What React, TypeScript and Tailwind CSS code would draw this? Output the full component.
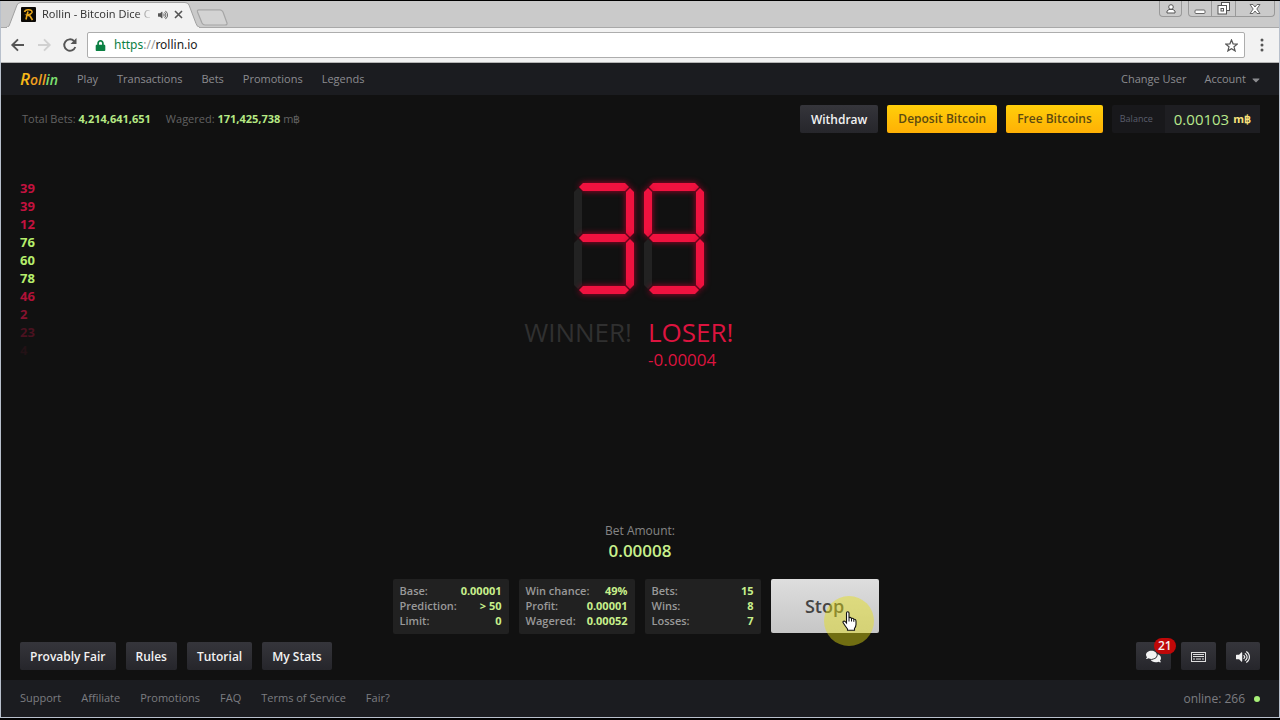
// App.tsx
import { FaVolumeUp, FaComments, FaLock, FaCaretDown } from 'react-icons/fa';

const navLinks = ['Play', 'Transactions', 'Bets', 'Promotions', 'Legends'];
const footerLinks = ['Support', 'Affiliate', 'Promotions', 'FAQ', 'Terms of Service', 'Fair?'];
const infoButtons = ['Provably Fair', 'Rules', 'Tutorial', 'My Stats'];

const rolls = [
  { value: 39, color: 'text-[#c4123f]' },
  { value: 39, color: 'text-[#c4123f]' },
  { value: 12, color: 'text-[#c4123f]' },
  { value: 76, color: 'text-[#b6ee6c]' },
  { value: 60, color: 'text-[#b6ee6c]' },
  { value: 78, color: 'text-[#b6ee6c]' },
  { value: 46, color: 'text-[#b01238]' },
  { value: 2, color: 'text-[#86122f]' },
  { value: 23, color: 'text-[#4b1220]' },
  { value: 4, color: 'text-[#231216]' },
];

const stats = [
  [['Base:', '0.00001'], ['Prediction:', '> 50'], ['Limit:', '0']],
  [['Win chance:', '49%'], ['Profit:', '0.00001'], ['Wagered:', '0.00052']],
  [['Bets:', '15'], ['Wins:', '8'], ['Losses:', '7']],
];

// segment order: top, top-left, top-right, middle, bottom-left, bottom-right, bottom
const segments = [
  '5,5 9,1 51,1 55,5 51,9 9,9',
  '4,6 8,10 8,51 4,55 0,51 0,10',
  '56,6 60,10 60,51 56,55 52,51 52,10',
  '5,56 9,52 51,52 55,56 51,60 9,60',
  '4,57 8,61 8,103 4,107 0,103 0,61',
  '56,57 60,61 60,103 56,107 52,103 52,61',
  '5,108 9,104 51,104 55,108 51,112 9,112',
];

const darkButton =
  'h-7 rounded-xs bg-linear-to-b from-[#35353b] to-[#26262b] pt-px text-[12px] font-semibold text-[#f2f2f2]';
const yellowButton =
  'h-7 rounded-xs bg-linear-to-b from-[#ffcf0a] to-[#ffb005] px-[11px] text-[12px] font-semibold text-[#5c4a10]';

const Digit = ({ on }: { on: number[] }) => (
  <svg width="60" height="113" viewBox="0 0 60 113" className="overflow-visible">
    {segments.map((points, i) => (
      <polygon
        key={i}
        points={points}
        className={on[i] ? 'fill-[#f0123f] drop-shadow-[0_0_3px_#b0002a]' : 'fill-[#222]'}
      />
    ))}
  </svg>
);

const BrowserBar = () => (
  <div className="font-['Noto_Sans','Open_Sans',sans-serif]">
    {/* Tabs */}
    <div className="flex h-[27px] items-start justify-between border-b border-[#a8a8a8] bg-[#cacaca]">
      <div className="flex">
        <div className="relative ml-[5px] h-[27px] w-[194px]">
          <svg width="194" height="27" viewBox="0 0 194 27" className="absolute inset-0">
            <path d="M0 26.5 C3 26 3 25 4 22.500 L11 4 Q12 1.500 15 1.500 H179 Q182 1.500 183 4 L190 22.500 Q191 26 194 26.500 V27 H0Z" fill="#f2f2f2" stroke="#a0a0a0" />
            <path d="M1 27H193" stroke="#f2f2f2" strokeWidth="2" />
          </svg>
          <div className="relative flex h-full items-center pl-[15px]">
            <svg width="15" height="15" viewBox="0 0 15 15" className="shrink-0">
              <rect width="15" height="15" rx="1" fill="#0b0906" />
              <path d="M3.500 5Q4 3 7 2.800Q11.500 2.500 11 5.500Q10 7.500 6.500 8L9 9L11.500 13M7 4.500L6 8L5 12.500" fill="none" stroke="#e8a81c" strokeWidth="1.600" />
            </svg>
            <span className="ml-[6px] w-[116px] bg-linear-to-r from-[#333] from-80% to-transparent to-95% bg-clip-text text-[11px] whitespace-nowrap text-transparent">
              Rollin - Bitcoin Dice C
            </span>
            <FaVolumeUp className="size-[10px] shrink-0 text-[#555]" />
            <button aria-label="Close tab" className="ml-[6px] shrink-0">
              <svg width="9" height="9" viewBox="0 0 9 9">
                <path d="M1 1L8 8M8 1L1 8" stroke="#555" strokeWidth="1.6" />
              </svg>
            </button>
          </div>
        </div>
        <button aria-label="New tab" className="mt-[6px]">
          <svg width="32" height="17" viewBox="0 0 32 17" className="-ml-1">
            <path d="M3 .8H24Q26 .8 27 3L31 14Q31.500 16 29 16H9Q7 16 6 14L1.500 3Q1 .8 3 .8Z" fill="#d3d3d3" stroke="#a6a6a6" strokeWidth="1.200" />
          </svg>
        </button>
      </div>
      <div className="mr-1 flex h-4 text-[#777]">
        <button aria-label="Profile" className="mr-[6px] flex w-[23px] items-center justify-center rounded-b border border-t-0 border-[#999]">
          <svg width="10" height="10" viewBox="0 0 10 10" fill="#fff" stroke="#555">
            <path d="M1 9V7L3 5.500H7L9 7V9Z" />
            <circle cx="5" cy="3" r="2.300" />
          </svg>
        </button>
        <button aria-label="Minimize" className="flex w-6 items-center justify-center rounded-bl border border-t-0 border-[#999]">
          <svg width="12" height="12" viewBox="0 0 12 12">
            <rect x="1" y="7" width="10" height="3.500" rx="1" fill="#fff" stroke="#666" />
          </svg>
        </button>
        <button aria-label="Restore" className="flex w-[23px] items-center justify-center border-b border-[#999]">
          <svg width="13" height="13" viewBox="0 0 13 13" fill="#fff" stroke="#555">
            <rect x="4.500" y=".5" width="8" height="8" />
            <rect x="1" y="3.500" width="8.500" height="8.500" />
            <rect x="4" y="6.500" width="2.500" height="2.500" />
          </svg>
        </button>
        <button aria-label="Close window" className="flex w-10 items-center justify-center rounded-br border border-t-0 border-[#999]">
          <svg width="12" height="10" viewBox="0 0 12 10">
            <path d="M1 .5H4L6 3L8 .5H11L7.800 5L11 9.500H8L6 7L4 9.500H1L4.200 5Z" fill="#fff" stroke="#666" />
          </svg>
        </button>
      </div>
    </div>
    {/* Address bar */}
    <div className="flex h-[35px] items-center border-b border-[#b5b5b5] bg-[#f2f2f2] pr-[14px] pl-[9px]">
      <button aria-label="Back">
        <svg width="16" height="16" viewBox="0 0 16 16" fill="none" stroke="#555" strokeWidth="1.900">
          <path d="M14 8H2.500M8 2.300L2.300 8L8 13.700" />
        </svg>
      </button>
      <button aria-label="Forward" className="ml-[10px]">
        <svg width="16" height="16" viewBox="0 0 16 16" fill="none" stroke="#d0d0d0" strokeWidth="1.900">
          <path d="M2 8H13.500M8 2.300L13.700 8L8 13.700" />
        </svg>
      </button>
      <button aria-label="Reload" className="ml-[10px]">
        <svg width="16" height="16" viewBox="0 0 16 16">
          <path d="M13.300 10A5.700 5.700 0 1 1 12 4" fill="none" stroke="#555" strokeWidth="1.900" />
          <path d="M14.500 1V7H8.500Z" fill="#555" />
        </svg>
      </button>
      <div className="ml-[9px] flex h-[26px] min-w-0 flex-1 items-center rounded-xs border border-[#adadad] bg-white pr-[10px] pl-[7px] text-[12px]">
        <FaLock className="mr-[8px] size-[11px] text-[#0b8043]" />
        <label htmlFor="url" className="text-[#0b8043]">
          https<span className="text-[#999]">://</span>
        </label>
        <input id="url" defaultValue="rollin.io" className="min-w-0 flex-1 text-[#222] outline-none" />
        <button aria-label="Bookmark">
          <svg width="13" height="13" viewBox="0 0 14 14" className="-mr-1">
            <path d="M7 1L8.700 5.200L13.200 5.500L9.700 8.400L10.900 12.800L7 10.400L3.100 12.800L4.300 8.400L.8 5.500L5.300 5.200Z" fill="none" stroke="#555" strokeWidth="1.300" />
          </svg>
        </button>
      </div>
      <button aria-label="Menu" className="ml-[14px]">
        <svg width="6" height="14" viewBox="0 0 6 14" fill="#555">
          <circle cx="3" cy="2" r="1.500" />
          <circle cx="3" cy="7" r="1.500" />
          <circle cx="3" cy="12" r="1.500" />
        </svg>
      </button>
    </div>
  </div>
);

const Header = () => (
  <header className="flex h-8 items-center justify-between bg-[#1b1c20] px-[19px] pt-px text-[11px] text-[#8c8c90]">
    <nav className="flex items-center gap-[19px]">
      <a href="#" className="w-[38px] text-[14px] leading-5 font-semibold whitespace-nowrap text-[#f0a020] italic">
        <span className="text-[17px] text-[#f5b818]">R</span>oll<span className="text-[#7fe070]">in</span>
      </a>
      {navLinks.map((link) => (
        <a key={link} href="#">{link}</a>
      ))}
    </nav>
    <div className="flex items-center gap-[18px]">
      <a href="#">Change User</a>
      <button className="flex items-center gap-1">
        Account <FaCaretDown className="-mr-[2px] size-3" />
      </button>
    </div>
  </header>
);

const TopBar = () => (
  <div className="flex items-center justify-between">
    <div className="flex gap-[15px] pl-[2px] text-[11px] text-[#626262]">
      <span>Total Bets: <b className="text-[#b6e884]">4,214,641,651</b></span>
      <span>Wagered: <b className="text-[#b6e884]">171,425,738</b> m฿</span>
    </div>
    <div className="flex gap-[9px]">
      <button className={`${darkButton} px-[11px]`}>Withdraw</button>
      <button className={yellowButton}>Deposit Bitcoin</button>
      <button className={yellowButton}>Free Bitcoins</button>
      <div className="flex h-7 items-center rounded-xs bg-[#18181b]">
        <span className="pr-3 pl-2 text-[9px] text-[#5a5e6c]">Balance</span>
        <span className="flex h-full items-center gap-1 bg-[#1e1e22] px-[9px] text-[15px] text-[#b8e88c]">
          0.00103 <b className="text-[11px] text-[#f8e27c]">m฿</b>
        </span>
      </div>
    </div>
  </div>
);

const StatPanels = () => (
  <div className="mt-[17px] flex justify-center gap-[10px] pr-[9px]">
    {stats.map((rows, i) => (
      <dl key={i} className="w-[116px] rounded-xs bg-[#212121] px-[7px] pt-1 pb-[6px] text-[11px] leading-[15px] font-semibold">
        {rows.map(([label, value]) => (
          <div key={label} className="flex justify-between whitespace-nowrap">
            <dt className="text-[#999]">{label}</dt>
            <dd className="font-bold text-[#c8f08c]">{value}</dd>
          </div>
        ))}
      </dl>
    ))}
    <div className="relative">
      <button className="h-[54px] w-[108px] rounded-xs bg-linear-to-b from-[#dedede] to-[#c6c6c6] text-[18px] font-semibold text-[#444]">
        Stop
      </button>
      <span className="absolute top-[17px] left-[53px] size-[50px] rounded-full bg-[#e6e014]/45" />
      {/* Pointer */}
      <svg width="15" height="20" viewBox="0 0 15 20" className="absolute top-8 left-[71px]">
        <path
          d="M4.500 12V2Q4.500 .7 5.700 .7Q7 .7 7 2V7.500L7.300 6.500Q9 6 9.500 7.500Q11 6.800 11.800 8.300Q14 8 14 10.500V13.500Q14 15.500 12.500 17.500V19.300H5.500V18Q3.500 15.500 1 11.500Q.8 10 2.200 10Q3.200 10.300 4.500 12Z"
          fill="#fff"
          stroke="#111"
          strokeWidth="1.100"
        />
        <path d="M7 7.500V10.500M9.500 7.800V10.500M11.800 8.500V10.800" stroke="#111" />
      </svg>
    </div>
  </div>
);

export default function App() {
  return (
    <div className="flex min-h-screen flex-col border-t border-black bg-[#111] font-['Open_Sans','Noto_Sans',sans-serif]">
      <div className="flex flex-1 flex-col border-x border-b border-[#b8c0cc]">
        <BrowserBar />
        <Header />
        <main className="flex flex-1 flex-col px-[19px] py-[10px]">
          <TopBar />

          <div className="mt-[46px] grid grid-cols-[1fr_auto_1fr] items-start">
            <ol className="text-[13px] leading-[18px] font-bold">
              {rolls.map((roll, i) => (
                <li key={i} className={roll.color}>{roll.value}</li>
              ))}
            </ol>
            <div className="mt-[3px] flex gap-[10px] pr-[2px]" role="img" aria-label="39">
              <Digit on={[1, 0, 1, 1, 0, 1, 1]} />
              <Digit on={[1, 1, 1, 1, 0, 1, 1]} />
            </div>
            <div className="col-span-3 -mt-[45px] grid grid-cols-2 gap-x-4 text-[26px] leading-[36px]">
              <p className="text-right text-[#303030]">WINNER!</p>
              <p className="text-[#dc143f]">LOSER!</p>
              <p className="col-start-2 text-[17px] leading-5 text-[#dc143f]">-0.00004</p>
            </div>
          </div>

          <div className="mt-auto text-center">
            <p className="text-[12px] leading-[18px] text-[#858585]">Bet Amount:</p>
            <p className="text-[17px] leading-[22px] font-semibold text-[#c8f08c]">0.00008</p>
          </div>
          <StatPanels />

          <div className="mt-2 flex justify-between">
            <div className="flex gap-[10px]">
              {infoButtons.map((label) => (
                <button key={label} className={`${darkButton} px-[10px]`}>{label}</button>
              ))}
            </div>
            <div className="flex gap-[10px]">
              <button aria-label="Chat" className={`relative ${darkButton} px-[10px]`}>
                <FaComments className="size-[15px]" />
                <span className="absolute -top-1 left-[18px] rounded-full bg-[#c00808] px-[4px] text-[12px] leading-4">21</span>
              </button>
              <button aria-label="Keyboard shortcuts" className={`${darkButton} px-[10px]`}>
                <svg width="15" height="10" viewBox="0 0 15 10" fill="none" stroke="#ddd">
                  <rect x=".5" y=".5" width="14" height="9" />
                  <path d="M2 2.500H13M2 4.500H13M2 7H4M5 7H10M11 7H13" />
                </svg>
              </button>
              <button aria-label="Sound" className={`${darkButton} px-[10px]`}>
                <FaVolumeUp className="size-[14px]" />
              </button>
            </div>
          </div>
        </main>
        <footer className="flex h-[37px] items-center justify-between bg-[#1b1c20] px-[19px] text-[11px] text-[#7c7c80]">
          <nav className="flex gap-5">
            {footerLinks.map((link) => (
              <a key={link} href="#">{link}</a>
            ))}
          </nav>
          <p className="flex items-center gap-[9px] text-[12px]">
            online: 266 <span className="size-[6px] rounded-full bg-[#a8f078]" />
          </p>
        </footer>
      </div>
      <div className="h-[2px] bg-black" />
    </div>
  );
}
